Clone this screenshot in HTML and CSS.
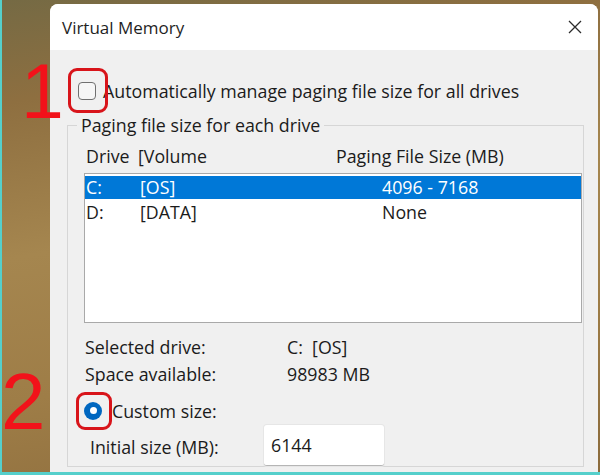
FILE: index.html
```html
<!DOCTYPE html>
<html>
<head>
<meta charset="utf-8">
<title>Virtual Memory</title>
<link rel="stylesheet" href="styles.css">
</head>
<body>
<div class="screen">
  <div class="dialog">
    <div class="titlebar">
      <span class="title">Virtual Memory</span>
      <svg class="close" width="14" height="14" viewBox="0 0 14 14"><path d="M1 1 L13 13 M13 1 L1 13" stroke="#2b2b2b" stroke-width="1.3" fill="none"/></svg>
    </div>
    <div class="content">
      <div class="auto-row">
        <span class="checkbox"></span>
        <span class="auto-text">Automatically manage paging file size for all drives</span>
      </div>
      <fieldset class="group">
        <legend class="group-label">Paging file size for each drive</legend>
        <div class="list-header">
          <span>Drive</span><span>[Volume</span><span>Paging File Size (MB)</span>
        </div>
        <div class="listbox">
          <div class="row selected"><span>C:</span><span>[OS]</span><span>4096 - 7168</span></div>
          <div class="row"><span>D:</span><span>[DATA]</span><span>None</span></div>
        </div>
        <div class="info">
          <span>Selected drive:</span><span>C:&nbsp; [OS]</span>
          <span>Space available:</span><span>98983 MB</span>
        </div>
        <div class="radio-row">
          <span class="radio"><span class="radio-dot"></span></span>
          <span>Custom size:</span>
        </div>
        <div class="initial-row">
          <span class="initial-label">Initial size (MB):</span>
          <div class="input">6144</div>
        </div>
      </fieldset>
    </div>
  </div>
  <span class="annot num1">1</span>
  <span class="annot num2">2</span>
  <span class="mark mark1"></span>
  <span class="mark mark2"></span>
</div>
</body>
</html>
```
FILE: styles.css
```css
html, body {
  margin: 0;
  padding: 0;
}
body {
  width: 600px;
  height: 475px;
  overflow: hidden;
  font-family: "Open Sans", "Noto Sans", sans-serif;
}
.screen {
  position: relative;
  width: 600px;
  height: 475px;
  box-sizing: border-box;
  border-left: 2px solid #55cfcb;
  border-bottom: 3px solid #55cfcb;
  overflow: hidden;
  padding: 4px 0 0 48px;
  background: linear-gradient(170deg, #756a44 0%, #8e6f40 18%, #a5864f 45%, #9e7d47 70%, #8b6b3c 100%);
}
.dialog {
  width: 548px;
  height: 480px;
  background: #f0f0f0;
  border-radius: 8px 8px 0 0;
  overflow: hidden;
  color: #1b1b1b;
  font-size: 17.8px;
}
.titlebar {
  height: 46px;
  background: #ffffff;
  display: flex;
  align-items: center;
  justify-content: space-between;
  padding: 0 16px 0 12px;
}
.title {
  font-size: 17px;
  color: #1f1f1f;
}
.close {
  display: block;
}
.content {
  padding: 29px 14px 0 17px;
}
.auto-row {
  display: flex;
  align-items: center;
  height: 24px;
  padding-left: 11px;
  gap: 7px;
}
.checkbox {
  width: 16px;
  height: 16px;
  border: 1.5px solid #707070;
  border-radius: 4px;
  background: #f6f6f6;
}
.group {
  margin: 11px 0 0 0;
  border: 1px solid #d6d6d6;
  padding: 0 1px 0 16px;
  min-width: 0;
}
.group-label {
  margin-left: -7px;
  padding: 0 4px;
  line-height: 22px;
}
.list-header {
  display: grid;
  grid-template-columns: 52px 198px 1fr;
  padding-left: 2px;
  margin-top: 9px;
  line-height: 22px;
}
.listbox {
  margin-top: 6px;
  height: 150px;
  box-sizing: border-box;
  border: 1px solid #a9a9a9;
  background: #ffffff;
  padding: 2px 0 0 0;
}
.row {
  display: grid;
  grid-template-columns: 54px 242px 1fr;
  height: 24px;
  line-height: 23px;
  padding-left: 1px;
}
.row.selected {
  background: #0078d7;
  color: #ffffff;
  height: 23px;
  margin-bottom: 2px;
}
.info {
  display: grid;
  grid-template-columns: 202px 1fr;
  grid-auto-rows: 27px;
  align-items: center;
  margin-top: 10px;
  padding-left: 1px;
}
.radio-row {
  display: flex;
  align-items: center;
  height: 27px;
  margin-top: 10px;
  gap: 10px;
  padding-left: 0;
}
.radio {
  width: 18px;
  height: 18px;
  border-radius: 50%;
  background: #0067c0;
  display: flex;
  align-items: center;
  justify-content: center;
}
.radio-dot {
  width: 7px;
  height: 7px;
  border-radius: 50%;
  background: #ffffff;
}
.initial-row {
  display: flex;
  align-items: center;
  height: 41px;
  margin-top: 1px;
  padding-left: 6px;
}
.initial-label {
  width: 174px;
  padding-top: 3px;
}
.input {
  width: 120px;
  height: 41px;
  box-sizing: border-box;
  background: #ffffff;
  border-radius: 3px;
  border-bottom: 1px solid #b5b5b5;
  box-shadow: 0 0 0 1px #e6e6e6;
  padding: 8px 0 0 7px;
}
.annot {
  position: absolute;
  font-family: "Liberation Sans", Arial, sans-serif;
  color: #f2121a;
  line-height: 1;
}
.num1 {
  left: 19px;
  top: 53px;
  font-size: 77px;
}
.num2 {
  left: -1px;
  top: 362px;
  font-size: 80px;
}
.mark {
  position: absolute;
  border: 3px solid #d8141a;
  border-radius: 9px;
  box-sizing: border-box;
}
.mark1 {
  left: 66px;
  top: 68px;
  width: 40px;
  height: 45px;
}
.mark2 {
  left: 74px;
  top: 392px;
  width: 36px;
  height: 38px;
}
```
